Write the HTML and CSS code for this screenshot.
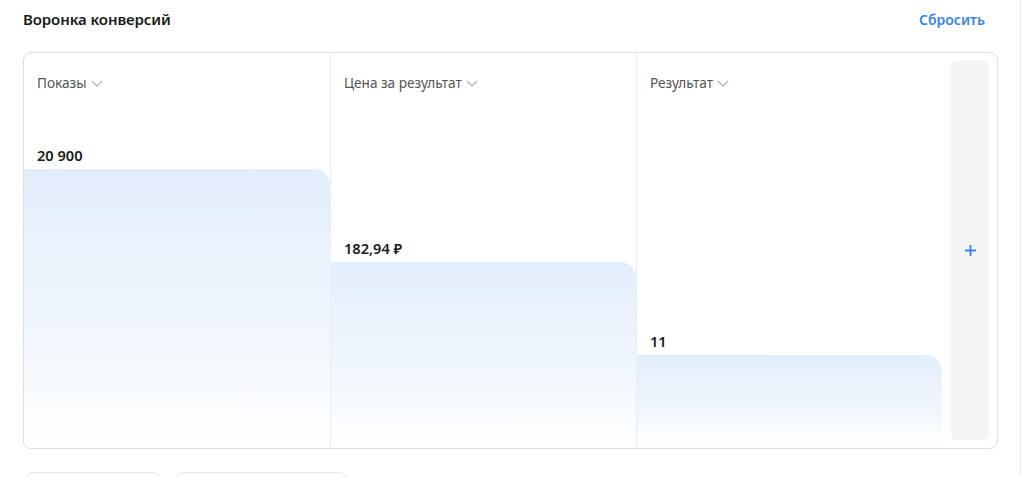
FILE: index.html
```html
<!DOCTYPE html>
<html lang="ru">

<head>
    <meta charset="UTF-8">
    <meta name="viewport" content="width=device-width, initial-scale=1.0">
    <title>Воронка конверсий</title>
    <link rel="stylesheet" href="styles.css">
</head>

<body>
    <div class="screen">
        <div class="page">
            <div class="header">
                <h2>Воронка конверсий</h2>
                <a class="reset" href="#">Сбросить</a>
            </div>

            <!-- Воронка -->
            <div class="card">
                <div class="col c1">
                    <div class="col-label">Показы <svg class="chev" viewBox="0 0 12 7"><path d="M1 1l5 5 5-5"/></svg></div>
                    <div class="col-value">20 900</div>
                    <div class="bar" style="height: 279px;"></div>
                </div>
                <div class="col c2">
                    <div class="col-label">Цена за результат <svg class="chev" viewBox="0 0 12 7"><path d="M1 1l5 5 5-5"/></svg></div>
                    <div class="col-value">182,94 ₽</div>
                    <div class="bar" style="height: 186px;"></div>
                </div>
                <div class="col c3">
                    <div class="col-label">Результат <svg class="chev" viewBox="0 0 12 7"><path d="M1 1l5 5 5-5"/></svg></div>
                    <div class="col-value">11</div>
                    <div class="bar" style="height: 93px;"></div>
                </div>
                <div class="add">
                    <svg class="plus" viewBox="0 0 12 12"><path d="M6 0v12M0 6h12"/></svg>
                </div>
            </div>

            <div class="pills">
                <div class="pill p1"></div>
                <div class="pill p2"></div>
            </div>
        </div>
    </div>
</body>

</html>
```

FILE: styles.css
```css
* {
    margin: 0;
    padding: 0;
    box-sizing: border-box;
}

body {
    background: #fff;
    font-family: 'Noto Sans', 'Open Sans', sans-serif;
    color: #1f1f1f;
    overflow: hidden;
}

.screen {
    width: 1021px;
    height: 477px;
    border-right: 1px solid #ececec;
    overflow: hidden;
}

.page {
    padding: 0 22px 0 23px;
}

.header {
    display: flex;
    justify-content: space-between;
    align-items: center;
    height: 38px;
    padding-right: 13px;
}

.header h2 {
    font-size: 15px;
    font-weight: 600;
    color: #1a1a1a;
    letter-spacing: -0.1px;
}

.reset {
    font-size: 14px;
    font-weight: 600;
    color: #3a87df;
    text-decoration: none;
}

.card {
    margin-top: 14px;
    height: 397px;
    border: 1px solid #dedede;
    border-radius: 8px;
    display: flex;
    overflow: hidden;
    padding-right: 8px;
}

.col {
    display: flex;
    flex-direction: column;
    border-right: 1px solid #e6eef8;
}

.c1 {
    width: 307px;
}

.c2 {
    width: 306px;
}

.c3 {
    width: 305px;
    border-right: none;
}

.col-label {
    flex: 1;
    padding: 21px 13px 0;
    font-size: 13.6px;
    line-height: 18px;
    color: #555;
    display: flex;
    align-items: flex-start;
    gap: 4px;
}

.chev {
    width: 12px;
    height: 7px;
    margin-top: 6px;
    fill: none;
    stroke: #b5b5b5;
    stroke-width: 1.3;
}

.col-value {
    padding: 0 13px;
    font-size: 14.6px;
    font-weight: 600;
    line-height: 20px;
    margin-bottom: 4px;
    color: #1a1a1a;
}

.bar {
    border-top-right-radius: 16px;
    background: linear-gradient(180deg, #e3eefc 0%, #edf4fd 45%, #fff 100%);
}

.add {
    margin: 8px 0 8px 9px;
    flex: 1;
    background: #f4f4f4;
    border-radius: 6px;
    display: flex;
    align-items: center;
    justify-content: center;
}

.plus {
    width: 11px;
    height: 11px;
    fill: none;
    stroke: #3a87df;
    stroke-width: 2;
}

.pills {
    display: flex;
    gap: 15px;
    margin-top: 23px;
    padding-left: 2px;
}

.pill {
    height: 30px;
    border: 1px solid #e8e8e8;
    border-radius: 8px;
}

.p1 {
    width: 136px;
}

.p2 {
    width: 171px;
}
```
